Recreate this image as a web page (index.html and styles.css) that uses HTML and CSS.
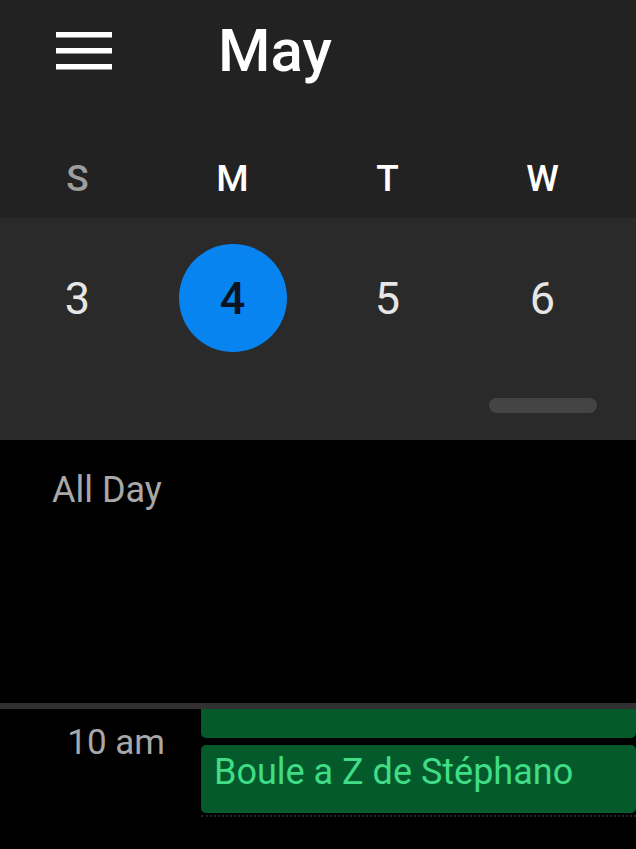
FILE: index.html
```html
<!DOCTYPE html>
<html lang="en">
<head>
    <meta charset="UTF-8">
    <meta name="viewport" content="width=device-width, initial-scale=1.0">
    <title>Calendar</title>
    <link rel="stylesheet" href="styles.css">
</head>
<body>
    <div id="app">
        <div class="topbar">
            <span class="menu">
                <svg width="56" height="38" viewBox="0 0 56 38">
                    <rect x="0" y="0" width="56" height="5.5" fill="#ffffff"/>
                    <rect x="0" y="16" width="56" height="5.5" fill="#ffffff"/>
                    <rect x="0" y="32" width="56" height="5.5" fill="#ffffff"/>
                </svg>
            </span>
            <h1 class="month">May</h1>
        </div>
        <ul class="weekdays">
            <li class="sunday">S</li>
            <li>M</li>
            <li>T</li>
            <li>W</li>
        </ul>
        <div class="dates">
            <ul class="days">
                <li><span>3</span></li>
                <li class="today"><span>4</span></li>
                <li><span>5</span></li>
                <li><span>6</span></li>
            </ul>
            <div class="handle"></div>
        </div>
        <div class="allday">All Day</div>
        <div class="hours">
            <div class="hour-label">10 am</div>
            <div class="events">
                <div class="event event-top"></div>
                <div class="event">Boule a Z de Stéphano</div>
                <div class="dots"></div>
            </div>
        </div>
    </div>
</body>
</html>
```

FILE: styles.css
```css
* {
    margin: 0;
    padding: 0;
}

li {
    list-style: none;
}

body {
    background: #000000;
    font-family: Roboto, "Liberation Sans", sans-serif;
    width: 636px;
    height: 849px;
    overflow: hidden;
}

.topbar {
    background: #222222;
    height: 110px;
    display: flex;
    align-items: flex-start;
}

.menu {
    display: block;
    margin: 32px 0 0 56px;
    width: 56px;
    height: 38px;
}

.menu svg {
    display: block;
}

.month {
    margin: 16px 0 0 106px;
    color: #ffffff;
    font-size: 60px;
    font-weight: 500;
    line-height: 70px;
}

.weekdays {
    background: #222222;
    height: 108px;
    display: grid;
    grid-template-columns: repeat(4, 155px);
    box-sizing: border-box;
    padding-top: 47px;
}

.weekdays li {
    text-align: center;
    color: #ffffff;
    font-size: 37px;
    font-weight: 500;
    line-height: 43px;
}

.weekdays li.sunday {
    color: #9e9e9e;
}

.dates {
    background: #2a2a2a;
    height: 222px;
    box-sizing: border-box;
    padding-top: 26px;
}

.days {
    display: grid;
    grid-template-columns: repeat(4, 155px);
}

.days li {
    display: flex;
    justify-content: center;
}

.days span {
    width: 108px;
    height: 108px;
    border-radius: 50%;
    display: flex;
    align-items: center;
    justify-content: center;
    color: #e6e6e6;
    font-size: 45px;
}

.days li.today span {
    background: #0884f0;
    color: #0b1420;
    font-weight: 500;
}

.handle {
    width: 108px;
    height: 15px;
    border-radius: 8px;
    background: #444444;
    margin: 46px 39px 0 auto;
}

.allday {
    height: 263px;
    box-sizing: border-box;
    padding: 29px 0 0 52px;
    color: #a8a8a8;
    font-size: 36px;
    line-height: 42px;
}

.hours {
    border-top: 6px solid #303030;
    display: flex;
}

.hour-label {
    width: 165px;
    text-align: right;
    padding-top: 13px;
    color: #a8a8a8;
    font-size: 35px;
    line-height: 41px;
    flex-shrink: 0;
}

.events {
    margin-left: 36px;
    flex: 1;
}

.event {
    background: #055a2b;
    border-radius: 5px;
    height: 68px;
    box-sizing: border-box;
    padding: 6px 0 0 13px;
    color: #3fdd86;
    font-size: 36px;
    line-height: 42px;
}

.event-top {
    height: 29px;
    border-radius: 0 0 5px 5px;
    margin-bottom: 7px;
    padding: 0;
}

.dots {
    margin-top: 2px;
    border-top: 2px dotted #262626;
}
```
